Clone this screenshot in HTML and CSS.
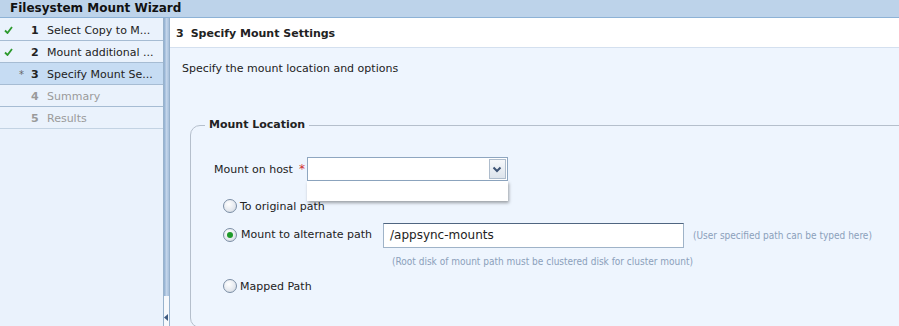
FILE: index.html
```html
<!DOCTYPE html>
<html>
<head>
<meta charset="utf-8">
<link rel="stylesheet" href="styles.css">
</head>
<body>
<div class="app">
  <div class="titlebar">Filesystem Mount Wizard</div>
  <div class="main">
    <nav class="steps">
      <div class="step done"><span class="mark"><svg width="9" height="8" viewBox="0 0 9 8"><path d="M1 4.5 L3.5 7 L8 1" fill="none" stroke="#2e9a2e" stroke-width="1.8"/></svg></span><span class="num">1</span><span class="label">Select Copy to M...</span></div>
      <div class="step done"><span class="mark"><svg width="9" height="8" viewBox="0 0 9 8"><path d="M1 4.5 L3.5 7 L8 1" fill="none" stroke="#2e9a2e" stroke-width="1.8"/></svg></span><span class="num">2</span><span class="label">Mount additional ...</span></div>
      <div class="step current"><span class="mark star">*</span><span class="num">3</span><span class="label">Specify Mount Se...</span></div>
      <div class="step todo"><span class="mark"></span><span class="num">4</span><span class="label">Summary</span></div>
      <div class="step todo"><span class="mark"></span><span class="num">5</span><span class="label">Results</span></div>
    </nav>
    <div class="splitter">
      <div class="grip"></div>
      <div class="knob"><svg width="4" height="7" viewBox="0 0 4 7"><path d="M4 0 L0 3.5 L4 7 Z" fill="#3e5a80"/></svg></div>
    </div>
    <section class="content">
      <div class="header"><span class="hnum">3</span>Specify Mount Settings</div>
      <div class="body">
        <p class="intro">Specify the mount location and options</p>
        <fieldset class="group">
          <legend>Mount Location</legend>
          <div class="hostrow">
            <span class="flabel">Mount on host</span>
            <span class="req">*</span>
            <div class="select">
              <span class="arrow"><svg width="10" height="7" viewBox="0 0 10 7"><path d="M1.5 1.5 L5 5 L8.5 1.5" fill="none" stroke="#3e5475" stroke-width="2"/></svg></span>
              <div class="popup"></div>
            </div>
          </div>
          <div class="radio r1"><span class="rb"></span><span>To original path</span></div>
          <div class="radio r2"><span class="rb on"></span><span class="rlabel">Mount to alternate path</span>
            <div class="pathbox">/appsync-mounts</div>
            <span class="hint">(User specified path can be typed here)</span>
          </div>
          <div class="hint note">(Root disk of mount path must be clustered disk for cluster mount)</div>
          <div class="radio r3"><span class="rb"></span><span>Mapped Path</span></div>
        </fieldset>
      </div>
    </section>
  </div>
</div>
</body>
</html>
```
FILE: styles.css
```css
* { box-sizing: border-box; }
html, body { margin: 0; padding: 0; }
body {
  width: 899px; height: 326px; overflow: hidden;
  font-family: "DejaVu Sans", Verdana, sans-serif;
  font-size: 11px; color: #222;
}
.app { display: flex; flex-direction: column; height: 326px; }
.titlebar {
  height: 18px; background: #bdd3ea; border-bottom: 1px solid #8db2d6;
  font-weight: bold; font-size: 12px; line-height: 17px; padding-left: 10px; color: #111;
}
.main { flex: 1; display: flex; min-height: 0; }
.steps { width: 163px; background: #eaf2fc; display: flex; flex-direction: column; padding-top: 1px; }
.step {
  height: 22px; display: flex; align-items: center; padding-top: 1px;
  border-bottom: 1px solid #a6bcd3; line-height: 21px;
}
.step:last-child { border-bottom-color: #c3d3e3; }
.step.current { background: #c6dcf3; }
.step.todo { color: #9a9a9a; }
.mark { width: 29px; padding-left: 4px; display: flex; align-items: center; }
.mark.star { justify-content: flex-end; padding-right: 5px; color: #666; font-size: 10px; }
.num { font-weight: bold; width: 18px; padding-left: 2px; }
.label { white-space: nowrap; }
.splitter {
  width: 7px; display: flex; flex-direction: column;
  border-left: 1px solid #98b2cc; border-right: 1px solid #98b2cc;
}
.grip { flex: 1; background: linear-gradient(to right, #8faed0, #c3d5ea 50%, #a8c0dc); }
.knob { height: 30px; background: #f7f9fc; display: flex; align-items: flex-end; padding-bottom: 5px; padding-left: 0; }
.content { flex: 1; display: flex; flex-direction: column; min-width: 0; }
.header {
  height: 30px; background: #fff; border-bottom: 1px solid #d4e0ef;
  font-weight: bold; line-height: 27px; padding: 2px 0 0 6px; white-space: nowrap;
}
.hnum { margin-right: 7px; }
.body { flex: 1; background: #eef5fe; padding-left: 12px; }
.intro { margin: 14px 0 0; line-height: 14px; }
.group {
  margin: 42px -20px 0 8px; padding: 0; height: 210px;
  border: 1px solid #b5bfcc; border-radius: 10px; position: relative;
}
.group legend { font-weight: bold; padding: 0 4px; margin-left: 14px; line-height: 14px; }
.hostrow { display: flex; align-items: center; margin: 25px 0 0 23px; height: 24px; }
.req { color: #d03030; margin: 0 4px 0 6px; font-size: 12px; }
.select {
  width: 201px; height: 24px; background: #fff; border: 1px solid #8ea6c0;
  position: relative; margin-left: -2px;
}
.arrow {
  position: absolute; right: 1px; top: 1px; width: 17px; height: 20px;
  background: linear-gradient(#f6f8fb, #dde4ec); border: 1px solid #aebccc;
  display: flex; align-items: center; justify-content: center;
}
.popup {
  position: absolute; left: -1px; top: 23px; width: 201px; height: 20px;
  background: #fff; box-shadow: 1px 2px 3px rgba(0,0,0,0.35);
}
.radio { display: flex; align-items: center; }
.rb {
  width: 14px; height: 14px; border-radius: 50%; border: 1px solid #7b8ea5;
  background: radial-gradient(circle at 40% 35%, #ffffff, #e4e8ee 60%, #c9d0d9);
  margin-right: 3px; display: inline-block; flex: none; position: relative;
}
.rb.on::after {
  content: ""; position: absolute; left: 3px; top: 3px; width: 6px; height: 6px;
  border-radius: 50%; background: #1f9a2a;
}
.r1 { margin: 18px 0 0 32px; height: 14px; }
.r2 { margin: 10px 0 0 32px; height: 25px; }
.r2 .rb { margin-top: -2px; }
.rlabel { width: 143px; padding-left: 1px; margin-top: -2px; }
.pathbox {
  width: 301px; height: 25px; background: #fff; border: 1px solid #9fb3c8; border-top-color: #4f6580;
  padding-left: 6px; line-height: 23px; font-size: 12px;
}
.hint { color: #8ba0bb; font-size: 10px; margin-left: 9px; font-family: "DejaVu Sans Condensed", "DejaVu Sans", sans-serif; }
.note { margin: 8px 0 0 201px; line-height: 12px; }
.r3 { margin: 11px 0 0 32px; height: 14px; }
```
